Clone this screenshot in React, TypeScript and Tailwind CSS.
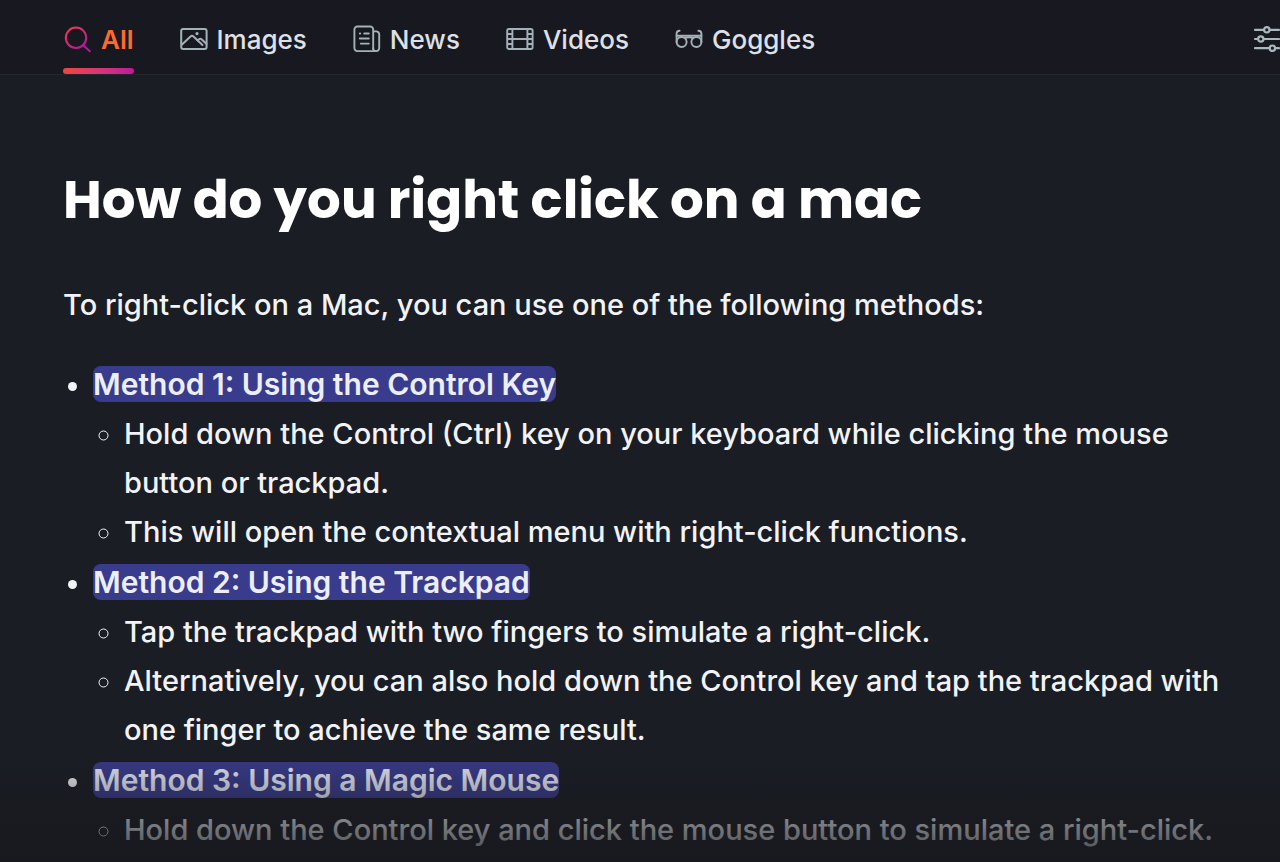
import React from "react";

type TTab = {
  label: string,
  icon: React.ReactNode
}

type TMethod = {
  title: string,
  steps: string[]
}

const tabs: TTab[] = [
  { label: "Images", icon: <ImagesIcon /> },
  { label: "News", icon: <NewsIcon /> },
  { label: "Videos", icon: <VideosIcon /> },
  { label: "Goggles", icon: <GogglesIcon /> }
]

const methods: TMethod[] = [
  {
    title: "Method 1: Using the Control Key",
    steps: [
      "Hold down the Control (Ctrl) key on your keyboard while clicking the mouse button or trackpad.",
      "This will open the contextual menu with right-click functions."
    ]
  },
  {
    title: "Method 2: Using the Trackpad",
    steps: [
      "Tap the trackpad with two fingers to simulate a right-click.",
      "Alternatively, you can also hold down the Control key and tap the trackpad with one finger to achieve the same result."
    ]
  },
  {
    title: "Method 3: Using a Magic Mouse",
    steps: ["Hold down the Control key and click the mouse button to simulate a right-click."]
  }
]

function SearchIcon() {
  return (
    <svg width="28" height="28" viewBox="0 0 28 28" fill="none" stroke="url(#brand)" strokeWidth="2" strokeLinecap="round">
      <defs>
        <linearGradient id="brand" x1="6" y1="2" x2="20" y2="22" gradientUnits="userSpaceOnUse">
          <stop offset="0" stopColor="#ee3a4e" />
          <stop offset="1" stopColor="#b5179e" />
        </linearGradient>
      </defs>
      <circle cx="13" cy="11.800" r="10.200" />
      <path d="M20.300 19.200l6.500 6" />
    </svg>
  )
}

function ImagesIcon() {
  return (
    <svg width="28" height="28" viewBox="0 0 28 28" fill="none" stroke="currentColor" strokeWidth="2" strokeLinecap="round" strokeLinejoin="round">
      <rect x="1.200" y="4" width="25.400" height="20" rx="2" />
      <path d="M2 19.500l8.500-8q1.500-1.400 3 0L22.500 20" />
      <path d="M17.500 15.500l1.500-1.200q1.400-1 2.800.200l4.500 4.200" />
      <circle cx="17" cy="8.600" r="1.600" fill="currentColor" stroke="none" />
    </svg>
  )
}

function NewsIcon() {
  return (
    <svg width="28" height="28" viewBox="0 0 28 28" fill="none" stroke="currentColor" strokeWidth="1.900" strokeLinecap="round" strokeLinejoin="round">
      <path d="M20.200 24V4.500a3 3 0 0 0-3-3H4.400a3 3 0 0 0-3 3v18.600a3 3 0 0 0 3 3h18.800a3 3 0 0 0 3-3V9.400a3 3 0 0 0-3-3h-3" />
      <path d="M20.200 23.500a2.600 2.600 0 0 0 2.600 2.600" />
      <path d="M6.800 8.500h.4M11.200 8.500h4.600M6.800 13.500h9M7.800 18.600h8" />
    </svg>
  )
}

function VideosIcon() {
  return (
    <svg width="28" height="28" viewBox="0 0 28 28" fill="none" stroke="currentColor" strokeWidth="1.900" strokeLinejoin="round">
      <rect x="1.200" y="4" width="25.400" height="20" rx="1.800" />
      <path d="M6.400 4v20M21.400 4v20M6.400 14h15M1.200 9h5.200M1.200 14h5.200M1.200 19h5.200M21.400 9h5.200M21.400 14h5.200M21.400 19h5.200" />
    </svg>
  )
}

function GogglesIcon() {
  return (
    <svg width="28" height="28" viewBox="0 0 28 28" fill="none" stroke="currentColor" strokeWidth="1.900" strokeLinecap="round" strokeLinejoin="round">
      <path d="M4.600 5.800q-3 .2-3 2.800V17" />
      <path d="M23.400 5.800q3 .2 3 2.800V17" />
      <path d="M1.600 10.800h24.800" />
      <circle cx="6.600" cy="17" r="5" />
      <circle cx="21.400" cy="17" r="5" />
      <path d="M9.800 13.200q1.800-1 4.200-1t4.200 1" />
    </svg>
  )
}

function SlidersIcon() {
  return (
    <svg width="28" height="28" viewBox="0 0 28 28" fill="none" stroke="currentColor" strokeWidth="2.200" strokeLinecap="round">
      <path d="M3 4.800h9M18 4.800h9M3 14h3M12 14h15M3 23.200h14.500M23.500 23.200H27" />
      <circle cx="14.800" cy="4.800" r="2.700" />
      <circle cx="8.800" cy="14" r="2.700" />
      <circle cx="20.400" cy="23.200" r="2.700" />
    </svg>
  )
}

const App: React.FC = () => {
  return (
    <div className="relative h-screen overflow-hidden bg-[#1b1d25] font-['Inter',sans-serif] text-[29px] font-medium text-[#f2f3f7]">
      <header className="flex items-stretch justify-between h-[75px] pl-[63px] bg-[#181920] border-b border-[#24262d] text-[26px]">
        <nav className="flex gap-[46px] text-[#dfe0e6]">
          <a href="#all" className="flex flex-col justify-between pt-5 font-semibold text-[#ff6a2b]">
            <span className="flex items-center gap-[10px]">
              <SearchIcon />
              All
            </span>
            <span className="h-[6px] rounded-full bg-linear-to-r from-[#f0443f] to-[#c0179a]" />
          </a>
          {tabs.map(t => (
            <a key={t.label} href={`#${t.label.toLowerCase()}`} className="flex items-center gap-[9px] pt-1">
              <span className="text-[#a3b1b8]">{t.icon}</span>
              {t.label}
            </a>
          ))}
        </nav>
        <button type="button" aria-label="Filters" className="shrink-0 pt-1 text-[#a9b8bf]">
          <SlidersIcon />
        </button>
      </header>

      <main className="pl-[63px] pr-8 pt-[87px]">
        <h1 className="font-[Poppins,Inter,sans-serif] text-[53px] leading-[76px] font-bold text-white">
          How do you right click on a mac
        </h1>
        <p className="mt-[42px] leading-[50px]">To right-click on a Mac, you can use one of the following methods:</p>
        <ul className="mt-[30px] pl-[30px] list-disc leading-[49px] space-y-0.5">
          {methods.map(m => (
            <li key={m.title}>
              <strong className="rounded-lg bg-[#393c8c] text-[30px] font-semibold text-[#eceefb]">{m.title}</strong>
              <ul className="pl-[31px] list-[circle]">
                {m.steps.map(s => <li key={s}>{s}</li>)}
              </ul>
            </li>
          ))}
        </ul>
      </main>

      {/* fades out the end of the answer */}
      <div className="absolute inset-x-0 bottom-0 h-[117px] bg-linear-to-b from-transparent to-[#17181c]/80 pointer-events-none" />
    </div>
  )
}

export default App
